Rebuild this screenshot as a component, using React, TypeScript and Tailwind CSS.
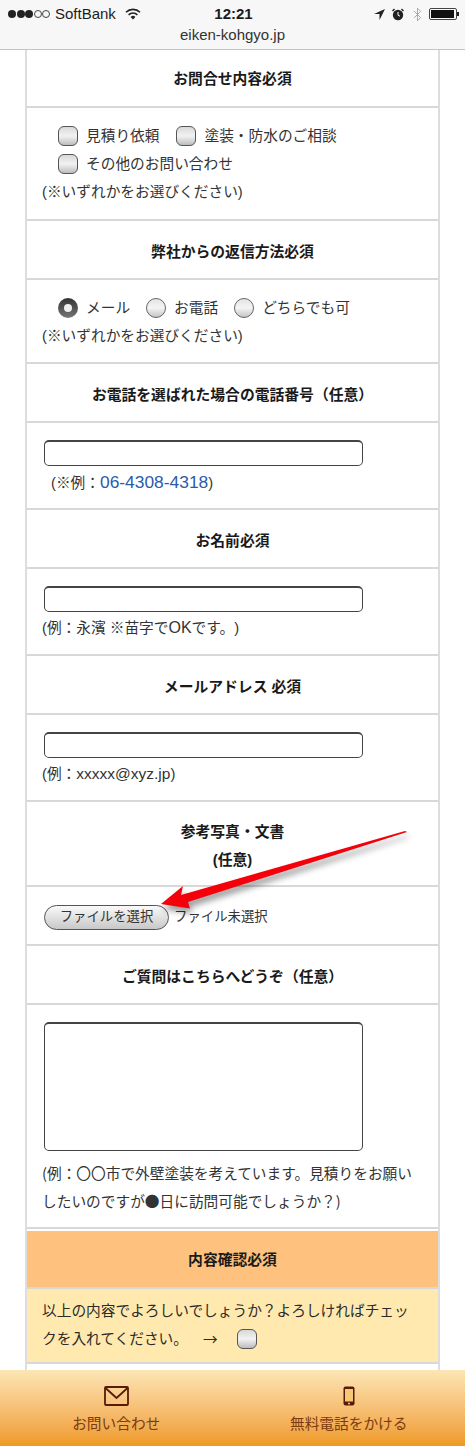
import React from 'react';
import { Bluetooth } from 'lucide-react';

const Checkbox = () => (
  <span className="inline-block w-5 h-5 shrink-0 rounded-[6px] border border-[#555] bg-gradient-to-b from-[#d8d8d8] via-[#f2f2f2] to-[#bdbdbd]" />
);

const Radio = ({ checked = false }: { checked?: boolean }) => (
  <span
    className={
      checked
        ? 'flex items-center justify-center w-5 h-5 shrink-0 rounded-full bg-gradient-to-b from-[#333] to-[#777]'
        : 'inline-block w-5 h-5 shrink-0 rounded-full border border-[#666] bg-gradient-to-b from-[#e4e4e4] via-[#f4f4f4] to-[#c4c4c4]'
    }
  >
    {checked && <span className="w-2 h-2 rounded-full bg-[#eee]" />}
  </span>
);

const Option = ({ control, label }: { control: React.ReactNode; label: string }) => (
  <span className="flex items-center gap-2">
    {control}
    <span>{label}</span>
  </span>
);

const TextBox = () => (
  <div className="ml-[2px] w-[319px] h-[26px] rounded-[5px] border border-[#444] border-t-2 bg-white" />
);

interface SectionProps {
  title: React.ReactNode;
  headerClass: string;
  bodyClass: string;
  children: React.ReactNode;
}

const Section: React.FC<SectionProps> = ({ title, headerClass, bodyClass, children }) => (
  <section>
    <div className={`flex items-center justify-center pt-[2px] text-center text-[14.8px] font-bold text-[#1a1a1a] border-b-2 border-[#d8d8d8] ${headerClass}`}>
      <div>{title}</div>
    </div>
    <div className={`px-[15px] border-b-2 border-[#d8d8d8] ${bodyClass}`}>{children}</div>
  </section>
);

const StatusBar = () => (
  <header className="h-[50px] bg-[#f7f7f7] border-b border-[#c4c4c4] font-['Liberation_Sans',sans-serif] text-[#1c1c1c]">
    <div className="grid grid-cols-3 items-center h-[27px] pl-[8px] pr-[6px]">
      <div className="flex items-center">
        <span className="flex items-center gap-[0.5px]">
          <span className="w-2 h-2 rounded-full bg-[#222]" />
          <span className="w-2 h-2 rounded-full bg-[#222]" />
          <span className="w-2 h-2 rounded-full bg-[#222]" />
          <span className="w-2 h-2 rounded-full border border-[#444]" />
          <span className="w-2 h-2 rounded-full border border-[#444]" />
        </span>
        <span className="ml-[5px] text-[15px] whitespace-nowrap">SoftBank</span>
        <svg className="ml-[9px] shrink-0" width="16" height="12" viewBox="0 0 16 12">
          <path d="M1 4.2a10 10 0 0 1 14 0" fill="none" stroke="#222" strokeWidth="1.6" />
          <path d="M3.6 6.8a6.4 6.4 0 0 1 8.8 0" fill="none" stroke="#222" strokeWidth="1.6" />
          <path d="M8 11.5 5.6 9a3.4 3.4 0 0 1 4.8 0z" fill="#222" />
        </svg>
      </div>
      <div className="text-center text-[15px] font-bold">12:21</div>
      <div className="flex items-center justify-end">
        <svg width="11" height="11" viewBox="0 0 10 10">
          <path d="M10 0 0 4.6h5V10z" fill="#222" />
        </svg>
        <svg className="ml-[7px]" width="12" height="13" viewBox="0 0 12 13">
          <circle cx="6" cy="7" r="5.2" fill="#222" />
          <path d="M6 4v3.2l2 1" fill="none" stroke="#fff" strokeWidth="1" />
          <path d="M0.5 3 2.5 1M11.5 3 9.5 1" stroke="#222" strokeWidth="1.4" />
        </svg>
        <Bluetooth className="ml-[6px] w-[15px] h-[17px] text-[#999]" strokeWidth={1.3} />
        <span className="ml-[4px] flex items-center">
          <span className="block w-[28px] h-[12px] border border-[#444] rounded-[2px] p-[1px]">
            <span className="block w-[23px] h-full bg-[#111]" />
          </span>
          <span className="block w-[2px] h-[4px] bg-[#222]" />
        </span>
      </div>
    </div>
    <div className="text-center text-[15px] leading-[16px] text-[#333]">eiken-kohgyo.jp</div>
  </header>
);

const BottomBar = () => (
  <nav className="absolute left-0 right-0 bottom-0 h-[76px] grid grid-cols-2 bg-gradient-to-b from-[#fbe6b4] to-[#ef991f] text-[#7d3b10] text-[14.7px]">
    <a className="flex flex-col items-center pt-[16px]">
      <svg width="25" height="20" viewBox="0 0 25 20">
        <rect x="1" y="1" width="23" height="18" rx="1" fill="none" stroke="#5a1a08" strokeWidth="1.8" />
        <path d="M1.5 2 12.5 12 23.5 2" fill="none" stroke="#5a1a08" strokeWidth="1.8" />
      </svg>
      <span className="mt-[4px]">お問い合わせ</span>
    </a>
    <a className="flex flex-col items-center pt-[16px]">
      <svg width="12" height="20" viewBox="0 0 12 20">
        <rect x="0.5" y="0.5" width="11" height="19" rx="2" fill="#5a1a08" />
        <rect x="2" y="3" width="8" height="12.5" fill="#f7c873" />
        <circle cx="6" cy="17.5" r="1" fill="#f7c873" />
      </svg>
      <span className="mt-[4px]">無料電話をかける</span>
    </a>
  </nav>
);

const Arrow = () => (
  <svg
    className="absolute left-[150px] top-[825px] drop-shadow-[2px_5px_3px_rgba(0,0,0,0.4)]"
    width="265"
    height="90"
    viewBox="150 825 265 90"
  >
    <polygon points="407,832 188,902 190,908.5 161,904 183,886 181,895 405,831" fill="#f5000a" />
  </svg>
);

export default function App() {
  return (
    <div className="relative h-[1446px] overflow-hidden bg-white font-['Liberation_Sans','Noto_Sans_CJK_JP',sans-serif] text-[14.7px] leading-[28px] text-[#333] [text-spacing-trim:space-all]">
      <StatusBar />
      <main className="ml-[25px] w-[415px] border-x-2 border-[#ddd] flex flex-col gap-[2px]">
        <Section title="お問合せ内容必須" headerClass="h-[58px]" bodyClass="h-[113px] pt-[14px]">
          <div className="pl-[16px] flex flex-wrap gap-x-[17px]">
            <Option control={<Checkbox />} label="見積り依頼" />
            <Option control={<Checkbox />} label="塗装・防水のご相談" />
            <div className="w-full">
              <Option control={<Checkbox />} label="その他のお問い合わせ" />
            </div>
          </div>
          <p>(※いずれかをお選びください)</p>
        </Section>
        <Section title="弊社からの返信方法必須" headerClass="h-[57px]" bodyClass="h-[84px] pt-[14px]">
          <div className="pl-[16px] flex gap-x-[16px]">
            <Option control={<Radio checked />} label="メール" />
            <Option control={<Radio />} label="お電話" />
            <Option control={<Radio />} label="どちらでも可" />
          </div>
          <p>(※いずれかをお選びください)</p>
        </Section>
        <Section title="お電話を選ばれた場合の電話番号（任意）" headerClass="h-[57px]" bodyClass="h-[87px] pt-[17px]">
          <TextBox />
          <p className="pl-[9px] mt-[2px]">
            (※例：<span className="text-[#2a5caa] text-[17.4px]">06-4308-4318</span>)
          </p>
        </Section>
        <Section title="お名前必須" headerClass="h-[57px]" bodyClass="h-[87px] pt-[17px]">
          <TextBox />
          <p className="mt-[2px]">
            (例：永濱 ※苗字で<span className="text-[16px]">OK</span>です。)
          </p>
        </Section>
        <Section title="メールアドレス 必須" headerClass="h-[57px]" bodyClass="h-[87px] pt-[17px]">
          <TextBox />
          <p className="mt-[2px]">
            (例：<span className="text-[15.5px]">xxxxx@xyz.jp</span>)
          </p>
        </Section>
        <Section
          title={
            <>
              参考写真・文書
              <br />
              (任意)
            </>
          }
          headerClass="h-[83px]"
          bodyClass="h-[59px] pt-[16px]"
        >
          <div className="ml-[2px] flex items-center">
            <button
              type="button"
              className="w-[125px] h-[25px] rounded-full border border-[#555] bg-gradient-to-b from-[#fafafa] to-[#c8c8c8] text-[13.4px] leading-none text-[#333]"
            >
              ファイルを選択
            </button>
            <span className="ml-[5px] text-[13.4px]">ファイル未選択</span>
          </div>
        </Section>
        <Section title="ご質問はこちらへどうぞ（任意）" headerClass="h-[57px]" bodyClass="h-[224px] pt-[17px]">
          <div className="ml-[2px] w-[319px] h-[129px] rounded-[5px] border border-[#444] border-t-2 bg-white" />
          <p className="mt-[8px] font-['Noto_Sans_CJK_JP',sans-serif]">
            (例：〇〇市で外壁塗装を考えています。見積りをお願いしたいのですが●日に訪問可能でしょうか？)
          </p>
        </Section>
        <Section
          title="内容確認必須"
          headerClass="h-[58px] bg-[#fec27e]"
          bodyClass="h-[75px] pt-[8px] bg-[#ffe9ae]"
        >
          <p className="text-[#2b2b2b]">以上の内容でよろしいでしょうか？よろしければチェッ</p>
          <div className="flex items-center text-[#2b2b2b]">
            <span>クを入れてください。</span>
            <span className="ml-[15px] mr-[19px] font-['Noto_Sans_CJK_JP']">→</span>
            <Checkbox />
          </div>
        </Section>
        <div className="h-[40px]" />
      </main>
      <Arrow />
      <BottomBar />
    </div>
  );
}
